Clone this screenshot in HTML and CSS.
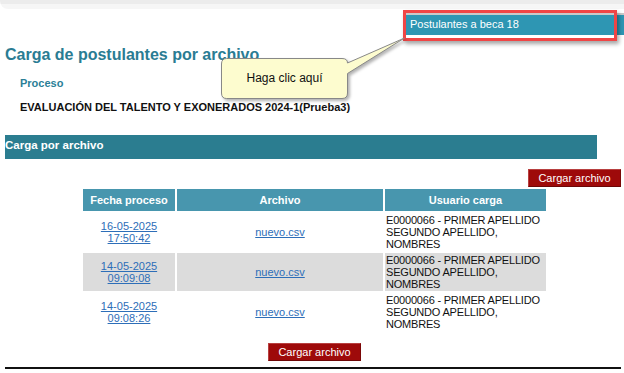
FILE: index.html
```html
<!DOCTYPE html>
<html lang="es">
<head>
<meta charset="utf-8">
<title>Carga de postulantes por archivo</title>
<link rel="stylesheet" href="styles.css">
</head>
<body>
<div class="topstrip"></div>
<div class="toprow">
  <div class="becabar">Postulantes a beca 18</div>
</div>
<div class="main">
  <h1 class="title">Carga de postulantes por archivo</h1>
  <div class="label">Proceso</div>
  <div class="value">EVALUACIÓN DEL TALENTO Y EXONERADOS 2024-1(Prueba3)</div>
  <div class="section">Carga por archivo</div>
  <div class="btnrow"><button class="btn">Cargar archivo</button></div>
  <table class="grid">
    <thead>
      <tr><th class="c1">Fecha proceso</th><th class="c2">Archivo</th><th class="c3">Usuario carga</th></tr>
    </thead>
    <tbody>
      <tr>
        <td class="center"><a href="#">16-05-2025<br>17:50:42</a></td>
        <td class="center"><a href="#">nuevo.csv</a></td>
        <td class="user">E0000066 - PRIMER APELLIDO SEGUNDO APELLIDO, NOMBRES</td>
      </tr>
      <tr class="alt">
        <td class="center"><a href="#">14-05-2025<br>09:09:08</a></td>
        <td class="center"><a href="#">nuevo.csv</a></td>
        <td class="user">E0000066 - PRIMER APELLIDO SEGUNDO APELLIDO, NOMBRES</td>
      </tr>
      <tr>
        <td class="center"><a href="#">14-05-2025<br>09:08:26</a></td>
        <td class="center"><a href="#">nuevo.csv</a></td>
        <td class="user">E0000066 - PRIMER APELLIDO SEGUNDO APELLIDO, NOMBRES</td>
      </tr>
    </tbody>
  </table>
  <div class="btnrow center-row"><button class="btn">Cargar archivo</button></div>
  <div class="rule"></div>
</div>

<div class="highlight"></div>
<div class="callout">
  <svg class="callout-shape" width="192" height="72" viewBox="0 0 192 72">
    <path d="M8.5,24.5 H124 Q129.5,24.5 129.5,29 L186.5,4 L129.5,39.5 V59 Q129.5,64.5 124,64.5 H8.5 Q3.5,64.5 3.5,59 V30 Q3.5,24.5 8.5,24.5 Z" fill="#fdfccf" stroke="#888" stroke-width="1"/>
  </svg>
  <div class="callout-text">Haga clic aquí</div>
</div>
</body>
</html>
```
FILE: styles.css
```css
* { box-sizing: border-box; }
html, body { margin: 0; padding: 0; background: #fff; }
body {
  font-family: "Liberation Sans", Arial, sans-serif;
  font-size: 11px;
  color: #111;
  position: relative;
  width: 624px;
  height: 373px;
  overflow: hidden;
}
.topstrip {
  height: 9px;
  background: linear-gradient(#ececec 0, #ececec 4px, #f6f6f6 4px, #f6f6f6 9px);
  border-bottom-left-radius: 8px;
}
.toprow {
  display: flex;
  justify-content: flex-end;
  padding-top: 4px;
}
.becabar {
  width: 218px;
  height: 22px;
  background: #2e96b3;
  border-top: 2px solid #c9c9c9;
  color: #fff;
  font-size: 11px;
  line-height: 19px;
  padding-left: 4px;
}
.main {
  padding: 0 0 0 5px;
}
.title {
  margin: 10px 0 0;
  font-size: 16px;
  line-height: 20px;
  font-weight: bold;
  color: #2a7c93;
}
.label {
  margin: 11px 0 0 15px;
  font-weight: bold;
  font-size: 11px;
  line-height: 14px;
  color: #2b7f97;
}
.value {
  margin: 10px 0 0 15px;
  font-weight: bold;
  font-size: 11px;
  line-height: 14px;
  color: #111;
}
.section {
  margin-top: 21px;
  width: 592px;
  height: 24px;
  background: #2b7d90;
  color: #fff;
  font-weight: bold;
  font-size: 11.5px;
  line-height: 16px;
  padding-top: 2px;
}
.btnrow {
  display: flex;
  justify-content: flex-end;
  margin-top: 10px;
  padding-right: 3px;
}
.center-row { justify-content: center; padding-right: 0; }
.btn {
  font-family: "Liberation Sans", Arial, sans-serif;
  font-size: 11px;
  color: #fff;
  background: #9e0a0a;
  border: 1px solid #b84040;
  border-bottom-color: #6e0606;
  border-right-color: #7a0707;
  height: 18px;
  width: 93px;
  padding: 0;
  line-height: 15px;
  margin: 0;
}
.grid {
  border-collapse: separate;
  border-spacing: 2px;
  margin: 0 auto;
  font-size: 11px;
}
.grid th {
  background: #4896ae;
  color: #fff;
  font-weight: bold;
  height: 22px;
  padding: 0;
  text-align: center;
}
.grid .c1 { width: 92px; }
.grid .c2 { width: 206px; }
.grid .c3 { width: 161px; }
.grid td {
  height: 38px;
  padding: 1px 1px;
  line-height: 12px;
  vertical-align: middle;
  text-align: left;
}
.grid td.user { letter-spacing: -0.2px; }
.grid td.center { text-align: center; }
.grid tr.alt td { background: #dcdcdc; }
.grid a { color: #2d6eb8; text-decoration: underline; }
.rule {
  margin-top: 6px;
  height: 2px;
  background: #111;
  width: 616px;
}
.highlight {
  position: absolute;
  left: 403px;
  top: 10px;
  width: 214px;
  height: 31px;
  border: 3px solid #f04545;
  box-shadow: 2px 3px 4px rgba(0,0,0,0.35);
}
.callout {
  position: absolute;
  left: 218px;
  top: 34px;
  width: 192px;
  height: 72px;
}
.callout-shape {
  position: absolute;
  left: 0;
  top: 0;
  filter: drop-shadow(2px 2px 1.5px rgba(0,0,0,0.3));
}
.callout-text {
  position: absolute;
  left: 3px;
  top: 24px;
  width: 127px;
  height: 40px;
  display: flex;
  align-items: center;
  justify-content: center;
  font-size: 12px;
  color: #111;
}
```
